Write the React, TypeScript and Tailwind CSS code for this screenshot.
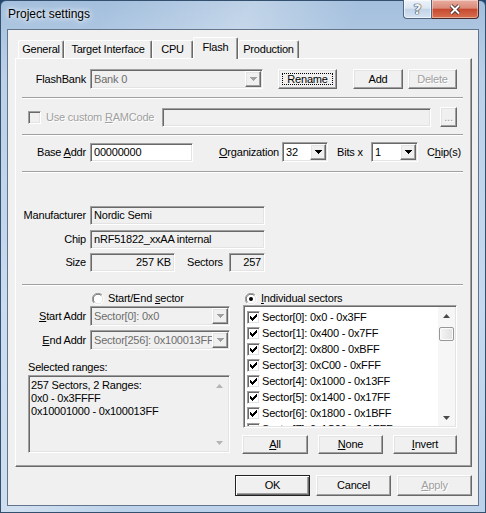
import React from 'react';
import clsx from 'clsx';

// classic 3D edges used by the dialog controls
const raised =
  'border border-t-white border-l-white border-r-[#696969] border-b-[#696969] bg-[#f0f0f0] shadow-[inset_-1px_-1px_0_#a0a0a0,inset_1px_1px_0_#e3e3e3]';
const sunken =
  'border border-t-[#a0a0a0] border-l-[#a0a0a0] border-r-white border-b-white shadow-[inset_1px_1px_0_#696969,inset_-1px_-1px_0_#e3e3e3]';
const grayText = 'text-[#a0a0a0] [text-shadow:1px_1px_0_#fff]';

type Kids = { children?: React.ReactNode; className?: string };

const tabs = [
  { label: 'General', className: 'w-[46px]' },
  { label: 'Target Interface', className: 'w-[88px]' },
  { label: 'CPU', className: 'w-[41px]' },
  { label: 'Flash', className: 'w-[45px]', active: true },
  { label: 'Production', className: 'w-[61px]' },
];

const sectors = [
  'Sector[0]: 0x0 - 0x3FF',
  'Sector[1]: 0x400 - 0x7FF',
  'Sector[2]: 0x800 - 0xBFF',
  'Sector[3]: 0xC00 - 0xFFF',
  'Sector[4]: 0x1000 - 0x13FF',
  'Sector[5]: 0x1400 - 0x17FF',
  'Sector[6]: 0x1800 - 0x1BFF',
  'Sector[7]: 0x1C00 - 0x1FFF',
];

function Button({
  children,
  className,
  primary,
  focused,
  disabled,
}: Kids & { primary?: boolean; focused?: boolean; disabled?: boolean }) {
  return (
    <div
      className={clsx(
        'relative flex shrink-0 items-center justify-center',
        primary
          ? 'border border-[#222] bg-[#f0f0f0] shadow-[inset_1px_1px_0_#fff,inset_-1px_-1px_0_#696969,inset_-2px_-2px_0_#a0a0a0]'
          : raised,
        disabled && grayText,
        className,
      )}
    >
      {focused && <div className="absolute inset-[3px] border border-dotted border-black" />}
      <span>{children}</span>
    </div>
  );
}

function DropArrow({ disabled }: { disabled?: boolean }) {
  return (
    <svg width="7" height="4" viewBox="0 0 7 4" shapeRendering="crispEdges">
      <polygon points="0,0 7,0 3.5,4" fill={disabled ? '#a0a0a0' : '#000'} />
    </svg>
  );
}

function ScrollArrow({ up, disabled }: { up?: boolean; disabled?: boolean }) {
  return (
    <svg width="7" height="4" viewBox="0 0 7 4">
      <polygon points={up ? '3.5,0 7,4 0,4' : '0,0 7,0 3.5,4'} fill={disabled ? '#b4b4b4' : '#4a4a4a'} />
    </svg>
  );
}

function Combo({ value, className, disabled }: { value: string; className?: string; disabled?: boolean }) {
  return (
    <div
      className={clsx(
        'flex shrink-0 p-[1px]',
        sunken,
        disabled ? 'bg-[#f0f0f0] text-[#6d6d6d]' : 'bg-white',
        className,
      )}
    >
      <div className="flex min-w-0 flex-1 items-center overflow-hidden whitespace-nowrap pl-[2px]">{value}</div>
      <div className={clsx('flex w-[16px] shrink-0 items-center justify-center', raised)}>
        <DropArrow disabled={disabled} />
      </div>
    </div>
  );
}

function Field({ children, className, white }: Kids & { white?: boolean }) {
  return (
    <div
      className={clsx(
        'flex shrink-0 items-center overflow-hidden whitespace-nowrap px-[3px]',
        sunken,
        white ? 'bg-white' : 'bg-[#f0f0f0]',
        className,
      )}
    >
      {children}
    </div>
  );
}

function Check({ checked, disabled }: { checked?: boolean; disabled?: boolean }) {
  return (
    <div
      className={clsx(
        'flex h-[13px] w-[13px] shrink-0 items-center justify-center',
        sunken,
        disabled ? 'bg-[#f0f0f0]' : 'bg-white',
      )}
    >
      {checked && (
        <svg width="7" height="7" viewBox="0 0 7 7" shapeRendering="crispEdges">
          <path d="M0 2 L2 4 L7 -1 L7 2 L2 7 L0 5 Z" fill="#000" />
        </svg>
      )}
    </div>
  );
}

function Radio({ checked }: { checked?: boolean }) {
  return (
    <svg width="12" height="12" viewBox="0 0 12 12" className="shrink-0">
      <circle cx="6" cy="6" r="5.5" fill="#fff" />
      <path d="M1.9 10.1 A5.5 5.5 0 0 1 10.1 1.9" stroke="#a0a0a0" fill="none" />
      <path d="M10.1 1.9 A5.5 5.5 0 0 1 1.9 10.1" stroke="#ffffff" fill="none" />
      <path d="M2.6 9.4 A4.6 4.6 0 0 1 9.4 2.6" stroke="#696969" fill="none" />
      <path d="M9.4 2.6 A4.6 4.6 0 0 1 2.6 9.4" stroke="#e3e3e3" fill="none" />
      {checked && <circle cx="6" cy="6" r="2" fill="#000" />}
    </svg>
  );
}

function Separator({ className }: { className?: string }) {
  return <div className={clsx('ml-[6px] h-[2px] w-[441px] border-t border-b border-t-[#a0a0a0] border-b-white', className)} />;
}

function Label({ children }: Kids) {
  return <div className="w-[70px] shrink-0 text-right">{children}</div>;
}

function CaptionButtons() {
  return (
    <div className="-mt-[1px] flex">
      <div className="flex h-[19px] w-[29px] items-center justify-center rounded-bl-[4px] border border-t-0 border-[#52677f] bg-[linear-gradient(180deg,#eef3f9_0%,#dce6f2_45%,#c3d4e8_52%,#d5e3f2_100%)] shadow-[inset_0_0_0_1px_rgba(255,255,255,0.6)]">
        <span className="font-['DejaVu_Sans',sans-serif] text-[14px] leading-none font-bold text-[#f4f4f4] [text-shadow:0_0_1px_#2e3c4e,0_0_1px_#2e3c4e,0_0_1px_#2e3c4e]">
          ?
        </span>
      </div>
      <div className="flex h-[19px] w-[47px] items-center justify-center rounded-br-[4px] border border-t-0 border-l-0 border-[#4b2a2a] bg-[linear-gradient(180deg,#e8aea0_0%,#db8a78_45%,#c64a31_52%,#d8704f_100%)] shadow-[inset_0_0_0_1px_rgba(255,255,255,0.4)]">
        <svg width="14" height="11" viewBox="0 0 14 11">
          <path d="M3 1.5 L11 9.5 M11 1.5 L3 9.5" stroke="#3d2626" strokeWidth="3.8" />
          <path d="M3 1.5 L11 9.5 M11 1.5 L3 9.5" stroke="#ffffff" strokeWidth="2" />
        </svg>
      </div>
    </div>
  );
}

export default function App() {
  return (
    <div className="h-[513px] w-[486px] bg-[#22466f]">
      <div className="flex h-[513px] w-[486px] flex-col rounded-t-[6px] border border-[#34506f] bg-[linear-gradient(115deg,rgba(255,255,255,0)_15%,rgba(255,255,255,0.3)_35%,rgba(255,255,255,0)_50%),linear-gradient(180deg,#a3bfdd_0%,#bcd1e8_15%,#c6d9ee_60%,#bcd2ea_100%)]">
        {/* caption */}
        <div className="flex h-[28px] shrink-0 items-start justify-between pl-[7px] pr-[6px]">
          <span className="mt-[6px] font-['Liberation_Sans',Arial,sans-serif] text-[12px] leading-[15px] text-black [text-shadow:0_0_8px_#fff,0_0_4px_#fff]">
            Project settings
          </span>
          <CaptionButtons />
        </div>

        {/* client area */}
        <div className="ml-[6px] h-[477px] w-[472px] border border-[#62758c] bg-[#f0f0f0] font-['Liberation_Sans',Arial,sans-serif] text-[11px] leading-[13px] tracking-[-0.2px] text-black">
          <div className="flex flex-col pt-[7px] pl-[7px] pr-[6px]">
            {/* tab strip */}
            <div className="flex h-[21px] items-end pl-[3px]">
              {tabs.map((t) =>
                t.active ? (
                  <div
                    key={t.label}
                    className={clsx(
                      'relative z-10 -mb-[1px] flex h-[22px] items-center justify-center rounded-t-[2px] border-t border-l border-r border-t-white border-l-white border-r-[#696969] bg-[#f0f0f0] pb-[2px] shadow-[inset_-1px_0_0_#a0a0a0]',
                      t.className,
                    )}
                  >
                    {t.label}
                  </div>
                ) : (
                  <div
                    key={t.label}
                    className={clsx(
                      'flex h-[18px] items-center justify-center rounded-t-[2px] border-t border-l border-r border-t-white border-l-white border-r-[#696969] shadow-[inset_-1px_0_0_#a0a0a0]',
                      t.className,
                    )}
                  >
                    {t.label}
                  </div>
                ),
              )}
            </div>

            {/* Flash page */}
            <div className="flex h-[409px] w-[457px] flex-col border border-t-white border-l-white border-r-[#696969] border-b-[#696969] shadow-[inset_-1px_-1px_0_#a0a0a0]">
              <div className="mt-[10px] flex h-[20px] items-center">
                <Label>FlashBank</Label>
                <Combo value="Bank 0" disabled className="ml-[4px] h-[20px] w-[173px]" />
                <Button focused className="ml-[15px] h-[20px] w-[59px]">
                  Rename
                </Button>
                <Button className="ml-[16px] h-[20px] w-[50px]">Add</Button>
                <Button disabled className="ml-[5px] h-[20px] w-[49px]">
                  Delete
                </Button>
              </div>

              <Separator className="mt-[8px]" />

              <div className="mt-[8px] flex h-[20px] items-center">
                <div className="ml-[12px]">
                  <Check disabled />
                </div>
                <span className={clsx('ml-[5px] w-[116px] shrink-0', grayText)}>
                  Use custom <u>R</u>AMCode
                </span>
                <Field className="h-[19px] w-[269px]" />
                <Button disabled className="ml-[9px] h-[20px] w-[17px]">
                  ...
                </Button>
              </div>

              <Separator className="mt-[7px]" />

              <div className="mt-[6px] flex h-[20px] items-center">
                <Label>
                  Base <u>A</u>ddr
                </Label>
                <Field white className="ml-[4px] h-[19px] w-[103px]">
                  00000000
                </Field>
                <span className="ml-[26px] w-[63px] shrink-0">
                  <u>O</u>rganization
                </span>
                <Combo value="32" className="h-[20px] w-[46px]" />
                <span className="ml-[9px] w-[34px] shrink-0">Bits x</span>
                <Combo value="1" className="h-[20px] w-[47px]" />
                <span className="ml-[9px]">
                  C<u>h</u>ip(s)
                </span>
              </div>

              <Separator className="mt-[9px]" />

              <div className="mt-[33px] flex h-[19px] items-center">
                <Label>Manufacturer</Label>
                <Field className="ml-[4px] h-[19px] w-[175px]">Nordic Semi</Field>
              </div>
              <div className="mt-[5px] flex h-[19px] items-center">
                <Label>Chip</Label>
                <Field className="ml-[4px] h-[19px] w-[175px]">nRF51822_xxAA internal</Field>
              </div>
              <div className="mt-[4px] flex h-[19px] items-center">
                <Label>Size</Label>
                <Field className="ml-[4px] h-[19px] w-[85px] justify-end">257 KB</Field>
                <span className="ml-[12px] w-[42px] shrink-0">Sectors</span>
                <Field className="h-[19px] w-[36px] justify-end">257</Field>
              </div>

              <Separator className="mt-[12px]" />

              <div className="mt-[6px] flex">
                {/* start / end range */}
                <div className="flex w-[214px] shrink-0 flex-col">
                  <div className="flex h-[13px] items-center pl-[76px]">
                    <Radio />
                    <span className="ml-[4px]">
                      Start/End <u>s</u>ector
                    </span>
                  </div>
                  <div className="mt-[1px] flex h-[20px] items-center">
                    <Label>
                      <u>S</u>tart Addr
                    </Label>
                    <Combo value="Sector[0]: 0x0" disabled className="ml-[4px] h-[20px] w-[140px]" />
                  </div>
                  <div className="mt-[4px] flex h-[20px] items-center">
                    <Label>
                      <u>E</u>nd Addr
                    </Label>
                    <Combo value="Sector[256]: 0x100013FF" disabled className="ml-[4px] h-[20px] w-[140px]" />
                  </div>
                  <div className="mt-[11px] ml-[12px] h-[13px]">Selected ranges:</div>
                  <div className={clsx('mt-[1px] ml-[12px] flex h-[78px] w-[202px] bg-[#f0f0f0] p-[1px]', sunken)}>
                    <div className="flex-1 pt-[2px] pl-[1px]">
                      <div>257 Sectors, 2 Ranges:</div>
                      <div>0x0 - 0x3FFFF</div>
                      <div>0x10001000 - 0x100013FF</div>
                    </div>
                    <div className="flex w-[17px] shrink-0 flex-col justify-between">
                      <div className="flex h-[17px] items-center justify-center">
                        <ScrollArrow up disabled />
                      </div>
                      <div className="flex h-[17px] items-center justify-center">
                        <ScrollArrow disabled />
                      </div>
                    </div>
                  </div>
                </div>

                {/* individual sectors */}
                <div className="ml-[13px] flex w-[214px] shrink-0 flex-col">
                  <div className="flex h-[13px] items-center pl-[2px]">
                    <Radio checked />
                    <span className="ml-[4px]">
                      <u>I</u>ndividual sectors
                    </span>
                  </div>
                  <div className={clsx('flex h-[123px] w-[214px] bg-white p-[1px]', sunken)}>
                    <div className="flex-1 overflow-hidden pt-[2px] pl-[2px]">
                      {sectors.map((s) => (
                        <div key={s} className="flex h-[16px] items-center whitespace-nowrap">
                          <Check checked />
                          <span className="ml-[2px]">{s}</span>
                        </div>
                      ))}
                    </div>
                    <div className="flex w-[17px] shrink-0 flex-col bg-[#f6f6f6]">
                      <div className="flex h-[17px] shrink-0 items-center justify-center">
                        <ScrollArrow up />
                      </div>
                      <div className="mx-[1px] mt-[3px] h-[14px] shrink-0 rounded-[2px] border border-[#979797] bg-[linear-gradient(90deg,#f5f5f5,#e0e0e0)] shadow-[inset_0_0_0_1px_#fbfbfb]" />
                      <div className="flex-1" />
                      <div className="flex h-[17px] shrink-0 items-center justify-center">
                        <ScrollArrow />
                      </div>
                    </div>
                  </div>
                  <div className="mt-[7px] -ml-[1px] flex">
                    <Button className="h-[19px] w-[66px]">
                      <u>A</u>ll
                    </Button>
                    <Button className="ml-[10px] h-[19px] w-[65px]">
                      <u>N</u>one
                    </Button>
                    <Button className="ml-[10px] h-[19px] w-[64px]">
                      <u>I</u>nvert
                    </Button>
                  </div>
                </div>
              </div>
            </div>

            {/* dialog buttons */}
            <div className="mt-[8px] flex justify-end gap-[6px]">
              <Button primary className="h-[21px] w-[75px]">
                OK
              </Button>
              <Button className="h-[21px] w-[75px]">Cancel</Button>
              <Button disabled className="h-[21px] w-[75px]">
                <u>A</u>pply
              </Button>
            </div>
          </div>
        </div>
      </div>
    </div>
  );
}
